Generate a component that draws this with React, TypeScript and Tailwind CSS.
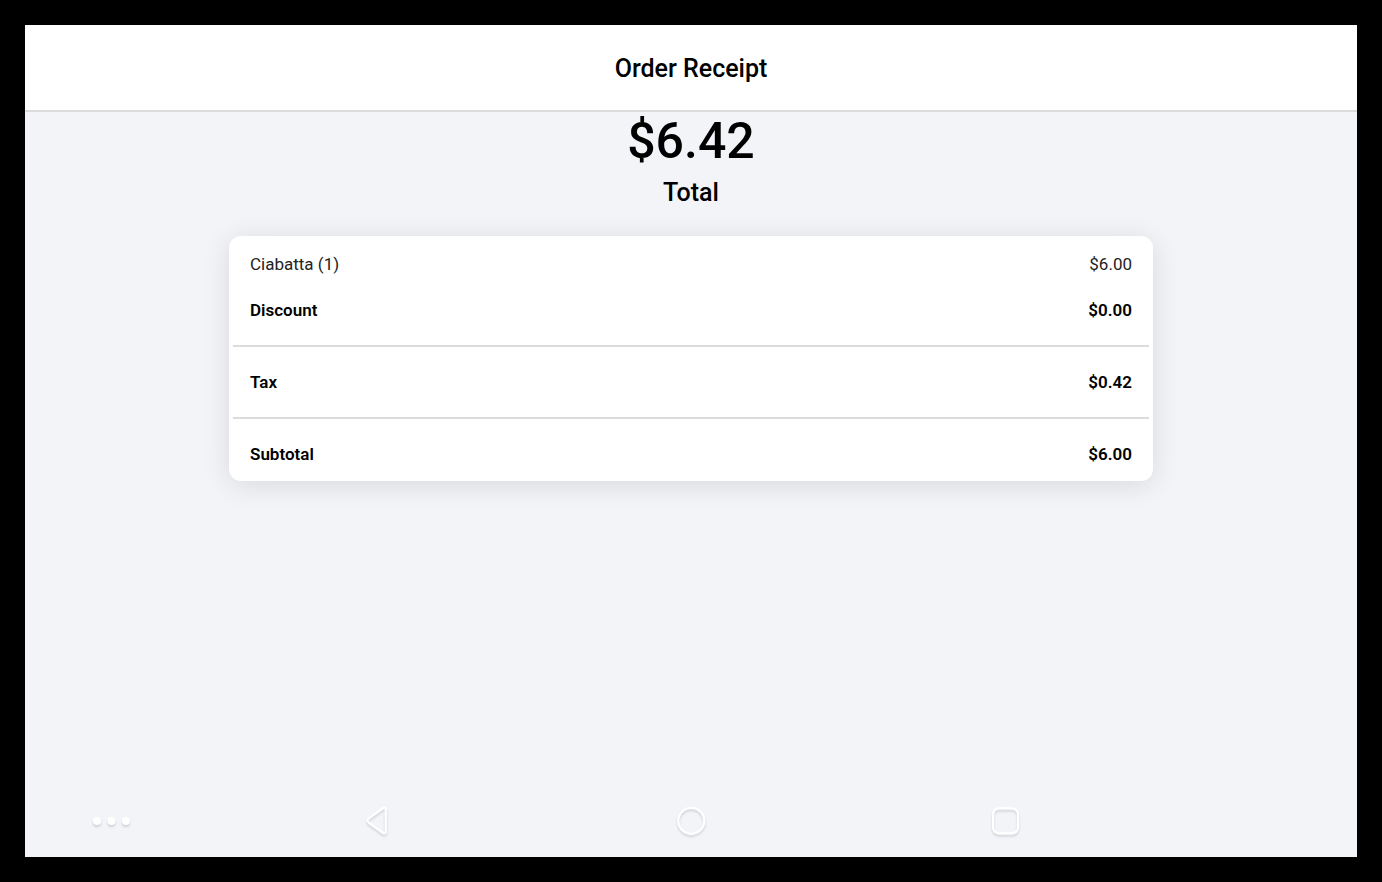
import { ReactNode } from "react";

const rows = [
  { label: "Discount", amount: "$0.00", cell: "pt-2.5 pb-[23px]", line: true },
  { label: "Tax", amount: "$0.42", cell: "py-[23px]", line: true },
  { label: "Subtotal", amount: "$6.00", cell: "pt-[23px] pb-[15px]", line: false },
];

function NavButton({ label, children }: { label: string; children: ReactNode }) {
  return (
    <button type="button" aria-label={label} className="drop-shadow-[0_2px_1px_rgba(0,0,0,0.14)]">
      {children}
    </button>
  );
}

export default function App() {
  return (
    <div className="min-h-screen flex flex-col border-25 border-black bg-[#f3f4f8] font-[Roboto,sans-serif] text-black">
      {/* Header */}
      <header className="border-b-2 border-[#dadbdc] bg-white pt-[26px] pb-[23px] text-center">
        <h1 className="text-[25px] leading-9 font-medium">Order Receipt</h1>
      </header>

      {/* Receipt */}
      <main className="flex-1 px-4">
        <div className="text-center font-medium">
          <p className="text-[50px] leading-[58px]">$6.42</p>
          <p className="text-[25px] leading-[46px]">Total</p>
        </div>
        <div className="mx-auto mt-5 w-full max-w-[924px] rounded-xl bg-white px-1 pt-1.5 shadow-[0_4px_28px_rgba(0,0,0,0.11)]">
          <table className="w-full border-collapse text-[17px] leading-6">
            <tbody>
              <tr className="text-[#222222]">
                <th scope="row" className="pt-2.5 pb-3 pl-[17px] text-left font-normal">
                  Ciabatta (1)
                </th>
                <td className="pt-2.5 pr-[17px] pb-3 text-right">$6.00</td>
              </tr>
              {rows.map((row) => (
                <tr
                  key={row.label}
                  className={row.line ? "border-b-2 border-[#dcdcdc] font-semibold" : "font-semibold"}
                >
                  <th scope="row" className={`${row.cell} pl-[17px] text-left font-semibold`}>
                    {row.label}
                  </th>
                  <td className={`${row.cell} pr-[17px] text-right`}>{row.amount}</td>
                </tr>
              ))}
            </tbody>
          </table>
        </div>
      </main>

      {/* System navigation */}
      <nav className="grid grid-cols-[195fr_314fr_314fr_314fr_195fr] items-center justify-items-center pb-5">
        <div className="flex pr-6">
          <NavButton label="More">
            <svg width="40" height="32" viewBox="0 0 40 32" fill="white">
              <circle cx="6" cy="16" r="4" />
              <circle cx="20.5" cy="16" r="4" />
              <circle cx="35" cy="16" r="4" />
            </svg>
          </NavButton>
        </div>
        <NavButton label="Back">
          <svg width="32" height="32" viewBox="0 0 32 32" fill="none" stroke="white" strokeWidth="2.2">
            <path d="M24.8 4.3V26.7a1.6 1.6 0 0 1-2.6 1.3L7.4 17.3a2.2 2.2 0 0 1 0-3.6L22.2 3a1.6 1.6 0 0 1 2.6 1.3Z" />
          </svg>
        </NavButton>
        <NavButton label="Home">
          <svg width="32" height="32" viewBox="0 0 32 32" fill="none" stroke="white" strokeWidth="2.2">
            <circle cx="16.3" cy="15.8" r="13" />
          </svg>
        </NavButton>
        <NavButton label="Recent apps">
          <svg width="32" height="32" viewBox="0 0 32 32" fill="none" stroke="white" strokeWidth="2.2">
            <rect x="4" y="3.4" width="25" height="25" rx="6" />
          </svg>
        </NavButton>
      </nav>
    </div>
  );
}
